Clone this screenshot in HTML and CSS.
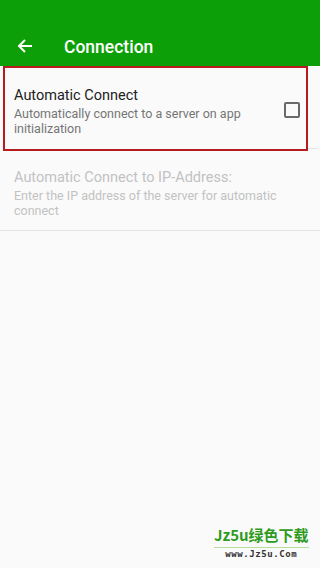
FILE: index.html
```html
<!DOCTYPE html>
<html>
<head>
<meta charset="utf-8">
<link rel="stylesheet" href="styles.css">
</head>
<body>
<div class="app">
  <header class="appbar">
    <svg class="back" width="16" height="16" viewBox="0 0 16 16"><path d="M15 8H2M8 2L2 8l6 6" fill="none" stroke="#fff" stroke-width="2"/></svg>
    <span class="title">Connection</span>
  </header>
  <div class="list">
    <div class="item item-hl">
      <div class="texts">
        <div class="t1">Automatic Connect</div>
        <div class="t2">Automatically connect to a server on app initialization</div>
      </div>
      <div class="check"></div>
    </div>
    <div class="item item-dis">
      <div class="texts">
        <div class="t1">Automatic Connect to IP-Address:</div>
        <div class="t2">Enter the IP address of the server for automatic connect</div>
      </div>
    </div>
  </div>
  <div class="wm">
    <div class="wm1">Jz5u绿色下载</div>
    <div class="wm2">www.Jz5u.Com</div>
  </div>
</div>
</body>
</html>
```
FILE: styles.css
```css
html, body { margin: 0; padding: 0; }
body { width: 320px; height: 568px; background: #fafafa; font-family: Roboto, "Noto Sans", sans-serif; overflow: hidden; }
.app { position: relative; height: 568px; }
.appbar { height: 66px; background: #0d9f07; display: flex; align-items: flex-end; padding: 0 0 7px 17px; box-sizing: border-box; }
.back { margin-bottom: 5px; }
.title { color: #fff; font-size: 17.5px; font-weight: 500; margin-left: 31px; line-height: 24px; }
.list { display: flex; flex-direction: column; }
.item { display: flex; align-items: center; border-bottom: 1px solid #e3e3e3; }
.item-hl { height: 85px; margin: 0 12px 0 3px; border: 2px solid #b71c1c; box-sizing: border-box; position: relative; }
.item-hl::after { content: ""; position: absolute; left: 303px; right: -12px; bottom: 0; border-bottom: 1px solid #e3e3e3; }
.item-hl .texts { padding-left: 9px; flex: 1; padding-top: 5px; }
.item-dis { height: 79px; padding-left: 14px; }
.texts { padding-right: 40px; }
.t1 { font-size: 14.5px; color: #222; line-height: 20px; }
.t2 { font-size: 12.5px; color: #757575; line-height: 15px; margin-top: 0; }
.item-dis .t1, .item-dis .t2 { color: #c2c2c2; }
.item-dis .texts { padding-top: 4px; padding-right: 20px; }
.check { width: 12px; height: 12px; border: 2px solid #6a6a6a; border-radius: 2px; margin-right: 6px; margin-top: 2px; flex: none; }
.wm { position: absolute; left: 214px; top: 525px; text-align: center; white-space: nowrap; }
.wm1 { color: #2f9a20; font-weight: 700; font-size: 15px; font-family: "Noto Sans CJK SC", sans-serif; line-height: 20px; }
.wm2 { font-family: "DejaVu Sans Mono", monospace; font-size: 9px; font-weight: 700; color: #333; line-height: 12px; margin-top: 2px; border-top: 1px solid #b9dd9a; letter-spacing: 0.6px; }
```
